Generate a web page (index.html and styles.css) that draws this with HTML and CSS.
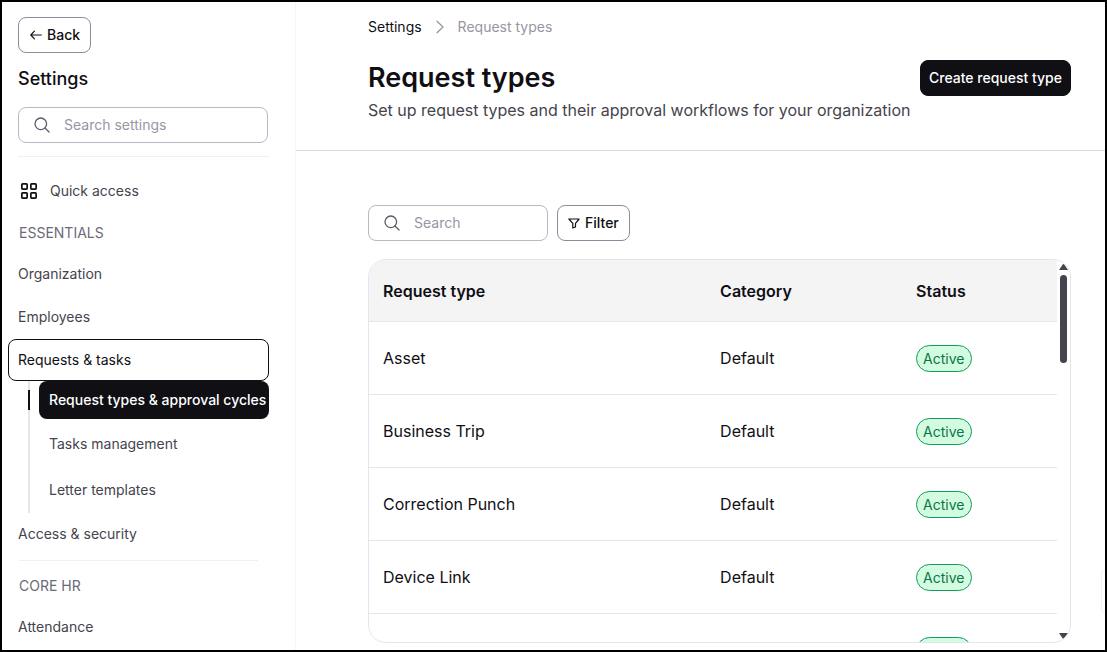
FILE: index.html
```html
<!DOCTYPE html>
<html lang="en">
<head>
    <meta charset="UTF-8">
    <meta name="viewport" content="width=device-width, initial-scale=1">
    <title>Request types</title>
    <link rel="stylesheet" href="styles.css">
</head>
<body>
<div class="app">
    <aside class="sidebar">
        <button type="button" class="btn btn-outline back-btn">
            <svg width="13" height="10" viewBox="0 0 13 10" fill="none" stroke="currentColor" stroke-width="1.2" stroke-linecap="round" stroke-linejoin="round"><path d="M12.3 5H1.8M5.4 1.2 1.8 5l3.6 3.8"/></svg>
            Back
        </button>
        <h2 class="sidebar-title">Settings</h2>
        <label class="search sidebar-search">
            <svg width="16" height="16" viewBox="0 0 16 16" fill="none" stroke="currentColor" stroke-width="1.3" stroke-linecap="round"><circle cx="6.8" cy="6.8" r="5.8"/><path d="m11 11 4 4"/></svg>
            <input type="text" placeholder="Search settings" aria-label="Search settings">
        </label>
        <hr class="divider">
        <nav class="menu">
            <a href="#" class="menu-link quick-link">
                <svg width="18" height="18" viewBox="0 0 18 18" fill="none" stroke="currentColor" stroke-width="1.7"><rect x="1.85" y="1.85" width="5.3" height="5.3" rx=".8"/><rect x="10.85" y="1.85" width="5.3" height="5.3" rx=".8"/><rect x="1.85" y="10.85" width="5.3" height="5.3" rx=".8"/><rect x="10.85" y="10.85" width="5.3" height="5.3" rx=".8"/></svg>
                Quick access
            </a>
            <h3 class="menu-heading">ESSENTIALS</h3>
            <a href="#" class="menu-link">Organization</a>
            <a href="#" class="menu-link">Employees</a>
            <a href="#" class="menu-link open">Requests &amp; tasks</a>
            <div class="submenu">
                <a href="#" class="submenu-link active">Request types &amp; approval cycles</a>
                <a href="#" class="submenu-link">Tasks management</a>
                <a href="#" class="submenu-link">Letter templates</a>
            </div>
            <a href="#" class="menu-link">Access &amp; security</a>
            <hr class="divider menu-divider">
            <h3 class="menu-heading">CORE HR</h3>
            <a href="#" class="menu-link">Attendance</a>
        </nav>
    </aside>

    <main class="main">
        <header class="page-header">
            <nav class="breadcrumb">
                <a href="#">Settings</a>
                <svg width="8" height="14" viewBox="0 0 8 14" fill="none" stroke="currentColor" stroke-width="1.3" stroke-linecap="round" stroke-linejoin="round"><path d="m1 1.2 6 5.8-6 5.8"/></svg>
                <span>Request types</span>
            </nav>
            <div class="title-row">
                <div>
                    <h1>Request types</h1>
                    <p class="subtitle">Set up request types and their approval workflows for your organization</p>
                </div>
                <button type="button" class="btn btn-dark">Create request type</button>
            </div>
        </header>

        <section class="content">
            <div class="toolbar">
                <label class="search toolbar-search">
                    <svg width="16" height="16" viewBox="0 0 16 16" fill="none" stroke="currentColor" stroke-width="1.3" stroke-linecap="round"><circle cx="6.8" cy="6.8" r="5.8"/><path d="m11 11 4 4"/></svg>
                    <input type="text" placeholder="Search" aria-label="Search">
                </label>
                <button type="button" class="btn btn-outline">
                    <svg width="12" height="11" viewBox="0 0 12 11" fill="none" stroke="currentColor" stroke-width="1.2" stroke-linejoin="round"><path d="M.9 1h10.2L7.5 5.4V9L4.8 10V5.4z"/></svg>
                    Filter
                </button>
            </div>

            <div class="card">
                <div class="table-area">
                    <table class="table">
                        <thead>
                            <tr>
                                <th class="col-type">Request type</th>
                                <th class="col-category">Category</th>
                                <th>Status</th>
                            </tr>
                        </thead>
                        <tbody>
                            <tr>
                                <td>Asset</td>
                                <td>Default</td>
                                <td><span class="badge">Active</span></td>
                            </tr>
                            <tr>
                                <td>Business Trip</td>
                                <td>Default</td>
                                <td><span class="badge">Active</span></td>
                            </tr>
                            <tr>
                                <td>Correction Punch</td>
                                <td>Default</td>
                                <td><span class="badge">Active</span></td>
                            </tr>
                            <tr>
                                <td>Device Link</td>
                                <td>Default</td>
                                <td><span class="badge">Active</span></td>
                            </tr>
                            <tr>
                                <td></td>
                                <td></td>
                                <td><span class="badge"></span></td>
                            </tr>
                        </tbody>
                    </table>
                </div>
                <div class="scrollbar" aria-hidden="true">
                    <svg width="9" height="6" viewBox="0 0 9 6"><path d="M3.7.5q.8-1 1.6 0L9 6H0z" fill="currentColor"/></svg>
                    <div class="scroll-thumb"></div>
                    <svg class="scroll-down" width="9" height="6" viewBox="0 0 9 6"><path d="M3.7 5.5q.8 1 1.6 0L9 0H0z" fill="currentColor"/></svg>
                </div>
            </div>
        </section>
    </main>
    <div class="side-tab"></div>
</div>
</body>
</html>
```
FILE: styles.css
```css
*{
    box-sizing: border-box;
    margin: 0;
}

body{
    font-family: Inter, "Noto Sans", sans-serif;
    font-size: 14px;
    line-height: 20px;
    color: #0f0f14;
    background-color: #fff;
}

a{
    color: inherit;
    text-decoration: none;
}

svg{
    flex-shrink: 0;
}

.app{
    position: relative;
    display: flex;
    height: 100vh;
    border: 2px solid #000;
    overflow: hidden;
}

/* buttons and inputs */
.btn{
    display: inline-flex;
    align-items: center;
    gap: 5px;
    height: 36px;
    padding: 0 10px;
    border: 1px solid #0f0f14;
    border-radius: 8px;
    font: inherit;
    font-weight: 500;
    white-space: nowrap;
    cursor: pointer;
}
.btn-outline{
    background-color: #fff;
    border-color: #8e8c9c;
    color: #0f0f14;
}
.btn-dark{
    background-color: #0f0f14;
    color: #fff;
    padding: 0 8px;
}

.search{
    display: flex;
    align-items: center;
    gap: 14px;
    height: 36px;
    padding: 0 15px;
    border: 1px solid #b9b8c6;
    border-radius: 8px;
    color: #5c5b66;
}
.search input{
    flex: 1;
    width: 100%;
    min-width: 0;
    padding: 0;
    border: none;
    outline: none;
    background: none;
    font: inherit;
    color: #0f0f14;
}
.search input::placeholder{
    color: #9896a3;
    opacity: 1;
}

.divider{
    border: none;
    border-top: 1px solid #f0f0f3;
}

/* sidebar */
.sidebar{
    flex: 0 0 294px;
    min-width: 0;
    padding: 15px 26px 0 6px;
    border-right: 1px solid #f6f6f8;
}
.back-btn{
    margin-left: 10px;
}
.sidebar-title{
    margin: 14px 0 0 10px;
    font-size: 18px;
    line-height: 24px;
    font-weight: 500;
}
.sidebar-search{
    margin: 16px 1px 13px 10px;
}
.sidebar .divider{
    margin-left: 10px;
}
.menu{
    display: flex;
    flex-direction: column;
    padding-top: 13px;
    color: #45444e;
}
.menu-link{
    display: flex;
    align-items: center;
    height: 42px;
    padding: 0 10px;
    margin-bottom: 1px;
}
.quick-link{
    gap: 12px;
    padding: 0 12px;
    margin-bottom: 0;
}
.quick-link svg{
    color: #0f0f14;
}
.menu-heading{
    padding-left: 11px;
    font-size: 14px;
    font-weight: 400;
    line-height: 41px;
    color: #6b6a76;
}
.menu-link.open{
    margin-bottom: 0;
    padding: 0 9px;
    border: 1px solid #0f0f14;
    border-radius: 8px;
    color: #0f0f14;
}
.submenu{
    position: relative;
    margin-left: 20px;
    padding-left: 9px;
    border-left: 2px solid #e8e8eb;
}
.submenu::before{
    content: "";
    position: absolute;
    left: -2px;
    top: 9px;
    width: 2px;
    height: 20px;
    background-color: #0f0f14;
}
.submenu-link{
    display: flex;
    align-items: center;
    height: 46px;
    padding-left: 10px;
    white-space: nowrap;
}
.submenu-link.active{
    height: 38px;
    margin-bottom: 2px;
    border-radius: 8px;
    background-color: #0f0f14;
    color: #fff;
    font-weight: 500;
}
.sidebar .menu-divider{
    margin: 4px 11px 4px 11px;
}

/* main */
.main{
    flex: 1;
    min-width: 0;
    display: flex;
    flex-direction: column;
}
.page-header{
    padding: 15px 34px 28px 72px;
    border-bottom: 1px solid #dcdbe5;
}
.breadcrumb{
    display: flex;
    align-items: center;
    gap: 14px;
    color: #9896a3;
}
.breadcrumb a{
    color: #0f0f14;
}
.title-row{
    display: flex;
    justify-content: space-between;
    align-items: flex-start;
    padding-top: 23px;
}
h1{
    font-size: 27px;
    line-height: 36px;
    font-weight: 600;
}
.subtitle{
    margin-top: 2px;
    font-size: 16px;
    line-height: 24px;
    color: #45444e;
}

.content{
    flex: 1;
    min-height: 0;
    display: flex;
    flex-direction: column;
    padding: 54px 34px 7px 72px;
}
.toolbar{
    display: flex;
    gap: 9px;
    margin-bottom: 18px;
}
.toolbar-search{
    width: 180px;
}

/* table */
.card{
    flex: 1;
    min-height: 0;
    display: flex;
    border: 1px solid #e6e5ee;
    border-radius: 18px;
    overflow: hidden;
}
.table-area{
    flex: 1;
    overflow: hidden;
}
.table{
    width: 100%;
    table-layout: fixed;
    border-collapse: separate;
    border-spacing: 0;
    font-size: 16px;
    text-align: left;
}
.table th,
.table td{
    height: 73px;
    padding: 0 14px;
    border-bottom: 1px solid #e6e5ee;
}
.table th{
    height: 62px;
    background-color: #f4f4f5;
    font-weight: 600;
}
.col-type{
    width: 49%;
}
.col-category{
    width: 196px;
}
.badge{
    display: inline-block;
    min-width: 56px;
    height: 27px;
    padding: 3px 6px;
    border: 1px solid #109c5c;
    border-radius: 14px;
    background-color: #d3fbdf;
    color: #08764a;
    font-size: 14px;
    line-height: 19px;
    vertical-align: middle;
}

.scrollbar{
    flex: 0 0 13px;
    display: flex;
    flex-direction: column;
    align-items: center;
    padding: 4px 0 3px;
    color: #45444e;
}
.scroll-thumb{
    width: 7px;
    height: 88px;
    margin-top: 5px;
    border-radius: 4px;
    background-color: #45444e;
}
.scroll-down{
    margin-top: auto;
}

.side-tab{
    position: absolute;
    right: 0;
    bottom: 37px;
    width: 4px;
    height: 43px;
    border: 1px solid #f2f2f5;
    border-right: none;
    border-radius: 4px 0 0 4px;
}
```
